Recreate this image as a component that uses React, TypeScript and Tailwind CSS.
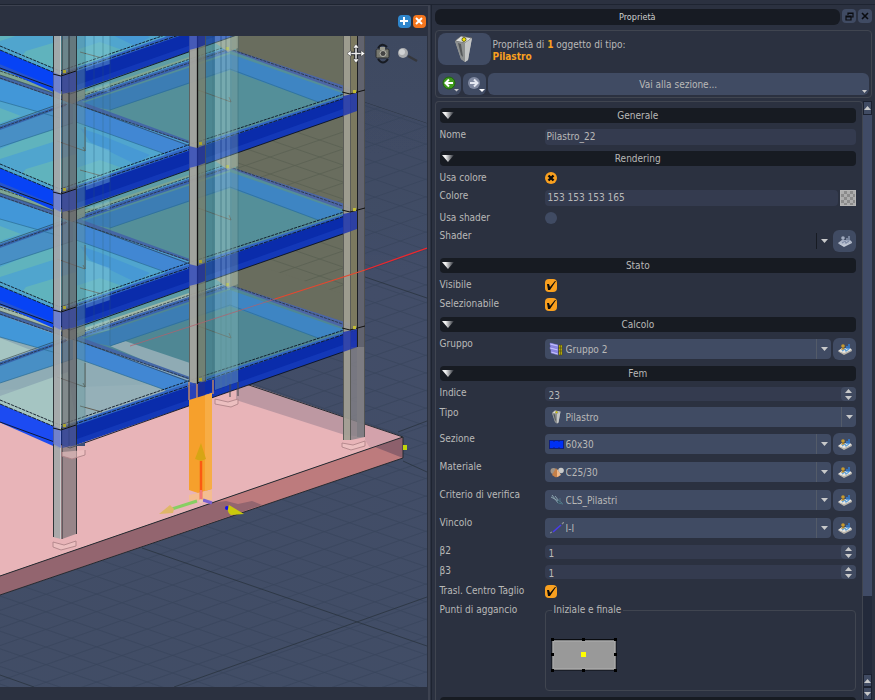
import React, { useState } from 'react';

const LEVELS = [354, 236, 118, 0];
const GRID_STEPS = Array.from({ length: 60 }, (_, i) => i);

const Grid: React.FC = () => (
  <g strokeWidth="0.8">
    <g stroke="#37445b" opacity="0.75">
      {GRID_STEPS.map(i => (
        <line key={`a${i}`} x1="0" y1={-20 + i * 17.6} x2="427" y2={127 + i * 17.6} />
      ))}
      {GRID_STEPS.map(i => (
        <line key={`b${i}`} x1="0" y1={100 + i * 17.6} x2="427" y2={-50 + i * 17.6} />
      ))}
    </g>
    <g stroke="#29333f">
      <path d="M365 102L427 123M365 277L427 298M142 548L427 646M174 687L427 597M0 675L34 687M403 461L427 472M398 432L427 421" />
    </g>
  </g>
);

// One storey: glass panes first, then the beams that frame them.
const Floor: React.FC<{ dy: number }> = ({ dy }) => {
  const ground = dy === 354;
  return (
    <g transform={`translate(0 ${dy - 118})`}>
      <path d="M-10 50L73 96L230 46L230 50L357 95L197 150L60 197L-10 168Z" fill={ground ? '#92b0b8' : '#4fa5d0'} opacity="0.97" />
      <path d="M73 101L230 50L357 95L197 146Z" fill={ground ? '#4f8794' : '#548f99'} />
      {ground && <path d="M110 110L125 105L190 127V144Z" fill="#8fabb4" />}
      {ground && <path d="M0 102L46 120L0 134ZM0 160L68 136L76 186L60 193L0 168Z" fill="#a5c5c2" />}
      {!ground && <path d="M0 149L53 127V142L0 159ZM26 169L76 154V184L60 189L22 174ZM0 108L21 116L0 123Z" fill="#60b3bd" />}
      {!ground && <path d="M76 168L100 160L128 170L76 187Z" fill="#5cb0bf" />}
      {!ground && <path d="M80 128L98 134L150 155L135 164L90 142Z" fill="#4799d4" />}
      <path d="M80 104L230 54L230 70L110 110Z" fill="#3c7db4" />
      <path d="M230 54L345 94L318 102L230 70Z" fill="#3e85c3" />
      <path d="M228 50L234 50L357 90L350 94Z" fill="#4c66a6" />
      <path d="M0 79L60 100L60 118L0 101Z" fill="#4297d8" />
      <path d="M0 128L73 103L73 123L0 147Z" fill="#488fc5" />
      <path d="M76 104L192 146L168 155L76 122Z" fill="#4187d3" />
      <path d="M76 99L230 47L230 52L78 103Z" fill="#3b64af" />
      <path d="M0 75L62 96L62 100L0 79ZM74 99L190 141L196 146L76 104Z" fill="#4467a6" />
      <path d="M0 126L66 103L66 106L0 130Z" fill="#3865ad" />
      <path d="M0 70L62 91L62 96L0 75ZM76 95L189 57V59L76 99Z" fill={ground ? '#a3b9a8' : '#7fa693'} />
      <g stroke="#242e39" strokeWidth="0.8" fill="none">
        <path d="M0 78L66 101L190 143M78 101L230 49L357 93M0 128L68 104M0 71L60 91M76 98L228 46" strokeDasharray="3 1" />
        <path d="M0 75L62 96M76 104L190 146M0 125L62 103" opacity="0.7" />
      </g>
      <path d="M76 122L168 155M110 110L230 69L318 102M0 147L73 123M0 101L60 118" stroke="#2b6d94" strokeWidth="0.7" fill="none" />
      {/* bracing arrows inside the bays */}
      <path d="M57 141L85 151M83 147L85 151M85 127L85 151M198 90L231 102M229 97L231 102M80 170L102 176" stroke="#5c5648" strokeWidth="0.9" fill="none" />

      <path d="M-10 164L60 193L60 213L-10 182Z" fill={ground ? '#1c4bf2' : '#0743f5'} />
      {!ground && <path d="M-10 178L60 207L68 211L-10 184Z" fill="#2553cd" />}
      <path d="M60 193L197 146L357 94L357 111L197 166L68 210L60 209Z" fill="#0a2cab" />
      <path d="M74 204L197 161L357 104L357 111L197 167L70 211Z" fill="#1338b8" />
      <path d="M60 191L197 144L357 92L357 94L197 148L60 195Z" fill="#3266c4" />
      <g stroke="#0c1320" strokeWidth="0.9" fill="none">
        <path d="M0 164L60 189L197 142L350 92" strokeDasharray="3 1" />
        <path d="M0 168L60 193L197 147L357 94" strokeDasharray="4 1" />
        <path d="M0 186L60 208L70 212L197 167L357 111L357 94" />
      </g>
    </g>
  );
};

const ModelView: React.FC = () => (
  <svg viewBox="0 36 427 651" preserveAspectRatio="xMinYMin slice" className="block h-full w-full" role="img" aria-label="Vista 3D">
    <defs>
      <linearGradient id="sky" x1="0" y1="0" x2="0" y2="1">
        <stop offset="0" stopColor="#3e4960" />
        <stop offset="0.3" stopColor="#424d68" />
        <stop offset="1" stopColor="#414d65" />
      </linearGradient>
      <clipPath id="plane">
        <path d="M0 36L240 60L365 102L427 123V687H0Z" />
      </clipPath>
    </defs>
    <rect x="-200" y="36" width="900" height="800" fill="url(#sky)" />
    <g clipPath="url(#plane)">
      <Grid />
    </g>

    {/* foundation slab */}
    <path d="M0 390L238 381L403 437L0 576Z" fill="#e8b4b8" />
    <path d="M248 384L365 424L365 437L345 435L236 400L236 384Z" fill="#bd98a2" />
    <path d="M365 424L403 437L370 448L365 440Z" fill="#d3a2ab" />
    <path d="M403 437V458L0 595V576Z" fill="#bd7b7d" />
    <path d="M0 576L212 503L226 501L238 504L252 501L262 505L0 595Z" fill="#93656f" />
    <path d="M375 447L403 437V458Z" fill="#8d606c" />
    <path d="M240 382L403 437V458L0 595M403 437L0 576" stroke="#252a30" strokeWidth="1" fill="none" />

    {/* rear wall */}
    <path d="M236 36H357V333L236 290Z" fill="#696d5e" />
    <g stroke="#5b6153" strokeWidth="0.8">
      {GRID_STEPS.slice(0, 12).map(i => (
        <path key={i} d={`M238 ${112 + i * 17}L343 ${148 + i * 17}M238 ${134 + i * 17}L343 ${98 + i * 17}`} fill="none" />
      ))}
    </g>
    <path d="M0 36H236V330H0Z" fill="#5e9da5" />
    <path d="M236 258L343 294V333L230 290Z" fill="#696d5e" />

    {LEVELS.map(dy => (
      <g key={dy}>
        <Floor dy={dy} />
        {/* joints between storeys */}
        <path d={`M214 ${dy - 76}L222 ${dy - 80}L238 ${dy - 84}V${dy - 70}L228 ${dy - 66}Z`} fill="#a39d83" opacity="0.9" />
        <path d={`M62 ${dy - 28}L85 ${dy - 31}V${dy - 20}L72 ${dy - 14}L62 ${dy - 18}Z`} fill="#8a8874" opacity="0.9" />
        <rect x="226" y={dy - 71} width="3" height="3" fill="#c3bd34" />
      </g>
    ))}

    {/* rear columns seen through the glass */}
    <g opacity="0.4">
      <path d="M215 36H232V290H215Z" fill="#a9d3d2" />
      <path d="M232 36H238V290H232Z" fill="#7fa5a2" />
      <path d="M205 36H215V380H205Z" fill="#427c86" />
      <path d="M76 36H85V420H76Z" fill="#63959c" />
      <path d="M221 36V390M226 36V390M231 36V390M238 36V390M213 36V370M85 36V420" stroke="#315e68" strokeWidth="0.8" />
    </g>
    <g opacity="0.35">
      <path d="M86 36H110V64L86 71ZM86 90L110 82V92L86 90ZM86 142L110 150V182L86 190ZM86 208L110 200V210L86 208ZM86 260L110 268V300L86 308ZM86 326L110 318V330L86 336Z" fill="#8fd0dc" />
      <path d="M94 36V330M103 36V330M110 36V345" stroke="#315e68" strokeWidth="0.8" />
    </g>
    <path d="M215 290H238V382L232 384L215 390Z" fill="#86bcbf" opacity="0.4" />
    <path d="M230 384V397M238 382V396" stroke="#45474c" />

    {/* front-left column */}
    <path d="M53 36H61V539L53 537Z" fill="#a5a8a9" opacity="0.93" />
    <path d="M62 36H76V534L62 539Z" fill="#716f73" opacity="0.68" />
    <path d="M69 36H76V446H69Z" fill="#586266" opacity="0.35" />
    <path d="M53.500 36V537M62 36V539M69 36V446M76.500 36V534" stroke="#23282c" strokeWidth="0.9" />
    <path d="M60.500 36V539" stroke="#d5d8d8" strokeWidth="0.7" />

    {/* middle column */}
    <path d="M189 36H197V384L189 382Z" fill="#a4a49e" opacity="0.95" />
    <path d="M198 36H205V382H198Z" fill="#77806f" opacity="0.85" />
    <path d="M189.500 36V382M205.500 36V382" stroke="#4d5350" strokeWidth="0.8" />
    <path d="M197.500 36V384" stroke="#111" strokeWidth="1.300" />

    {/* right column */}
    <path d="M343 36H351V440H343Z" fill="#a19f93" opacity="0.93" />
    <path d="M351 36H357V330H351Z" fill="#7c795f" />
    <path d="M357 36H365V437H357Z" fill="#656670" opacity="0.9" />
    <path d="M351 347H365V437L351 440Z" fill="#858287" opacity="0.8" />
    <path d="M343.500 36V440M350.500 36V440M364.500 36V437" stroke="#4a4b49" strokeWidth="0.8" />
    <path d="M357.500 36V347" stroke="#1b1d22" />

    {/* beam ends over the columns */}
    {LEVELS.map(dy => (
      <g key={dy}>
        <path d={`M53 ${dy + 72}L61 ${dy + 76}V${dy + 94}L53 ${dy + 90}Z`} fill="#5a70dc" opacity="0.65" />
        <path d={`M62 ${dy + 76}L76 ${dy + 71}V${dy + 91}L62 ${dy + 94}Z`} fill="#3a4a9e" opacity="0.75" />
        <path d={`M53 ${dy + 74}L61 ${dy + 76}L76 ${dy + 71}`} stroke="#111" fill="none" />
        <path d={`M189 ${dy + 28}L197 ${dy + 30}V${dy + 48}L189 ${dy + 50}Z`} fill="#2f48bd" opacity="0.8" />
        <path d={`M197 ${dy + 30}L205 ${dy + 27}V${dy + 45}L197 ${dy + 48}Z`} fill="#1c2f96" opacity="0.85" />
        <path d={`M343 ${dy - 22}L357 ${dy - 25}V${dy - 7}L343 ${dy - 2}Z`} fill="#2036ae" opacity="0.85" />
        <path d={`M342 ${dy - 26}L350 ${dy - 24}L365 ${dy - 28}`} stroke="#111" fill="none" />
        <rect x="63" y={dy + 70} width="3" height="3" fill="#a9a330" />
        <rect x="199" y={dy + 24} width="3" height="3" fill="#a9a330" />
        <rect x="353" y={dy - 28} width="3" height="3" fill="#c3bd34" />
      </g>
    ))}

    {/* footings */}
    <g stroke="#b08489" strokeWidth="0.9" fill="#efc6c5" fillOpacity="0.6">
      <path d="M53 542V547L61 550L76 546V541L64 545Z" />
      <path d="M215 399V404L231 407L238 404V399L228 402Z" />
      <path d="M342 443V447L351 450L365 446V441L353 445Z" />
      <path d="M62 452V456L72 459L85 455V450" />
    </g>
    <path d="M76 446H85V442L76 445Z" fill="#3c4f78" />

    {/* selected column */}
    <path d="M189 400L212 393V489L198 493L189 490Z" fill="#f6a02c" />
    <path d="M205 395L212 393V489L205 491Z" fill="#f7ad45" />
    <path d="M189 382V400M197 384V398M213 380V394" stroke="#e89a55" strokeWidth="1.200" />
    <path d="M189 495L212 490V500L189 501Z" fill="#f4bd91" />

    {/* x axis */}
    <path d="M427 248L365 270" stroke="#f0262c" strokeWidth="1.300" />
    <path d="M365 270L275 299" stroke="#e6472f" strokeWidth="1.200" />
    <path d="M275 299L130 346" stroke="#b4606c" strokeWidth="0.9" opacity="0.8" />

    {/* move gizmo */}
    <path d="M201 500V461" stroke="#fb5a12" strokeWidth="2.500" />
    <path d="M201 499V490" stroke="#f07878" strokeWidth="2.500" />
    <path d="M201 443L206 459L201 461L195 459Z" fill="#d7a514" />
    <path d="M197 501L172 509" stroke="#87cf62" strokeWidth="3" />
    <path d="M159 514L170 505L174 509L173 513Z" fill="#dfb768" />
    <path d="M203 500L212 503" stroke="#7c62cf" strokeWidth="3" />
    <circle cx="201" cy="501" r="2" fill="#eac7b0" />
    <circle cx="227" cy="508" r="2" fill="#1010f0" />
    <path d="M229 505Q226 512 231 515L244 514Z" fill="#c9c90c" />
    <rect x="403" y="445" width="4" height="5" fill="#c2d50b" />

    {/* view tools */}
    <path d="M356 47V60M349 53.500H363" stroke="#20242c" strokeWidth="3.500" />
    <path d="M356 47V60M349 53.500H363" stroke="#eee" strokeWidth="1.500" />
    <path d="M356 44L359 48H353ZM356 63L359 59H353ZM347 53.500L351 50.500V56.500ZM365 53.500L361 50.500V56.500Z" fill="#fff" stroke="#333" strokeWidth="0.5" />
    <path d="M378 48Q382 42 387 47M378 59Q383 66 388 59" stroke="#171b22" strokeWidth="2" fill="none" />
    <rect x="376" y="49" width="13" height="9" rx="1.500" fill="#77786f" stroke="#2b2d31" />
    <rect x="380" y="47" width="5" height="3" fill="#9b9b90" />
    <circle cx="383" cy="53.500" r="3" fill="#444" stroke="#b8b8ae" />
    <path d="M408 56L417 61" stroke="#35373c" strokeWidth="2.500" />
    <circle cx="403" cy="53" r="5" fill="#a9abad" />
    <circle cx="402" cy="52" r="3" fill="#d0d2d3" />
  </svg>
);

const PillarIcon: React.FC<{ className?: string }> = ({ className }) => (
  <svg viewBox="0 0 18 28" className={className} aria-hidden="true">
    <path d="M0 6L6 1L17 3L16 8L13 25L10 27L6 24Z" fill="#9fa1a1" />
    <path d="M0 6L6 1L17 3L10 8Z" fill="#dcdddc" stroke="#4d4f50" strokeWidth="0.7" />
    <path d="M10 8L17 3L13 25L10 27Z" fill="#c3c5c5" />
    <path d="M0 6L10 8L10 27L6 24Z" fill="#8d9090" />
    <path d="M3 8L6 9L8 22L6 20Z" fill="#55585a" />
    <circle cx="9" cy="4.500" r="2" fill="#f1e300" stroke="#4c4a12" strokeWidth="0.8" />
  </svg>
);

const GroupIcon = () => (
  <svg viewBox="0 0 15 14" className="h-[14px] w-[15px]" aria-hidden="true">
    <path d="M1 1L9 3V12L2 10Z" fill="#8e8ae6" />
    <path d="M1 1L9 3V5L1 3ZM1 5L9 7V9L1 7ZM2 9L9 11V13L2 11Z" fill="#c3c1ff" stroke="#6a66c4" strokeWidth="0.5" />
    <path d="M10 3H13V13H10Z" fill="#e0d000" stroke="#4e4a10" strokeWidth="0.6" />
    <path d="M10 6H13M10 9H13M11.500 3V13" stroke="#4e4a10" strokeWidth="0.7" />
  </svg>
);

const SectionIcon = () => (
  <svg viewBox="0 0 15 9" className="h-[9px] w-[15px]" aria-hidden="true">
    <rect x="0.500" y="0.500" width="14" height="8" fill="#0030f5" stroke="#10207c" />
    <path d="M5 0V2M10 0V2M5 7V9M10 7V9" stroke="#10207c" />
  </svg>
);

const MaterialIcon = () => (
  <svg viewBox="0 0 14 12" className="h-[12px] w-[14px]" aria-hidden="true">
    <circle cx="3.500" cy="5" r="3" fill="#a09488" />
    <circle cx="11" cy="4.500" r="2.800" fill="#c9cac9" />
    <path d="M6 2L10 8Q9 12 5 11L2 9Z" fill="#c47f48" />
    <path d="M7 3L7 11L11 9Z" fill="#efb88a" />
  </svg>
);

const CriterionIcon = () => (
  <svg viewBox="0 0 14 12" className="h-[12px] w-[14px]" aria-hidden="true">
    <path d="M2 1L8 9M5 2L9 7M1 3L12 9" stroke="#8aa2ad" fill="none" />
    <path d="M8 6L13 10L8 9ZM10 4V10" stroke="#4f7486" strokeWidth="0.9" fill="#263540" />
  </svg>
);

const ConstraintIcon = () => (
  <svg viewBox="0 0 14 12" className="h-[12px] w-[14px]" aria-hidden="true">
    <path d="M3 10L11 3" stroke="#4a3cf0" strokeWidth="1.500" />
    <path d="M0 11L2 10M12 2L14 0" stroke="#8a8d92" strokeWidth="1.300" />
  </svg>
);

const LibraryIcon: React.FC<{ dim?: boolean }> = ({ dim }) => (
  <svg viewBox="0 0 14 12" className="h-[12px] w-[14px]" aria-hidden="true">
    <path d="M0 8L4 5L12 5L14 7L6 11Z" fill={dim ? '#b4bccd' : '#e9e6df'} />
    <path d="M0 8L6 10L14 7V8L6 12L1 9Z" fill={dim ? '#c2c9d6' : '#b9b5ac'} />
    <path d="M4 8L7 6L8 8L11 6" stroke={dim ? '#7f8ba6' : '#5fa0d8'} strokeWidth="1.200" fill="none" />
    <circle cx="5" cy="3" r="1.800" fill={dim ? '#a1abc0' : '#c79a2e'} />
    <path d="M3 7L5 4L7 6Z" fill={dim ? '#a1abc0' : '#a87d20'} />
    <path d="M11 1V6M9 3V6" stroke={dim ? '#8995ae' : '#2f7fd6'} strokeWidth="1.500" fill="none" />
  </svg>
);

const Triangle: React.FC<{ up?: boolean }> = ({ up }) => (
  <svg viewBox="0 0 7 4" className="h-[4px] w-[7px]" aria-hidden="true">
    <path d={up ? 'M0 4L3.500 0L7 4Z' : 'M0 0H7L3.500 4Z'} fill="#c8c9ca" />
  </svg>
);

const SectionHeader: React.FC<{ title: string; onClick?: () => void }> = ({ title, onClick }) => (
  <button type="button" onClick={onClick} className="relative h-[15px] w-full shrink-0 rounded bg-[#171b22] pr-5 text-center leading-[16px]">
    <svg viewBox="0 0 12 7" className="absolute top-1 left-0.5 h-[7px] w-[12px]" aria-hidden="true">
      <defs>
        <linearGradient id="fold" x1="0" x2="1">
          <stop offset="0.3" stopColor="#f2f2f2" />
          <stop offset="1" stopColor="#23272f" />
        </linearGradient>
      </defs>
      <path d="M0 0H12L6 7Z" fill="url(#fold)" />
    </svg>
    {title}
  </button>
);

const Row: React.FC<{ id: string; label: string; children: React.ReactNode }> = ({ id, label, children }) => (
  <div className="flex shrink-0">
    <label htmlFor={id} className="w-[105px] shrink-0 leading-[12px] whitespace-nowrap">{label}</label>
    <div className="flex min-w-0 flex-1 items-center gap-0.5">{children}</div>
  </div>
);

const Combo: React.FC<{ id: string; value: string; icon: React.ReactNode }> = ({ id, value, icon }) => (
  <div className="relative h-5 min-w-0 flex-1">
    <select id={id} className="block h-5 w-full appearance-none rounded bg-[#404b63] pt-0.5 pl-[21px] leading-[16px] outline-none">
      <option>{value}</option>
    </select>
    <span className="pointer-events-none absolute inset-y-0 left-1 flex w-4 items-center justify-center">{icon}</span>
    <span className="pointer-events-none absolute inset-y-0 right-0 flex w-[15px] items-center justify-center border-l border-[#535b69]">
      <Triangle />
    </span>
  </div>
);

const LibraryButton: React.FC<{ label: string; dim?: boolean }> = ({ label, dim }) => (
  <button type="button" aria-label={label} className="flex h-[22px] w-[23px] shrink-0 items-center justify-center rounded-md bg-[#404b63]">
    <LibraryIcon dim={dim} />
  </button>
);

const Spinner: React.FC<{ id: string; initial: number }> = ({ id, initial }) => {
  const [value, setValue] = useState(initial);
  return (
    <div className="flex h-[14px] min-w-0 flex-1 rounded bg-[#343b4f]">
      <input
        id={id}
        type="text"
        inputMode="numeric"
        value={value}
        onChange={e => setValue(Number(e.target.value) || 0)}
        className="min-w-0 flex-1 bg-transparent pt-0.5 pl-1 outline-none"
      />
      <div className="flex w-[15px] flex-col items-center justify-between rounded-sm bg-[#404a60] py-px">
        <button type="button" aria-label="Aumenta" onClick={() => setValue(value + 1)} className="flex h-[5px] items-center">
          <Triangle up />
        </button>
        <button type="button" aria-label="Diminuisci" onClick={() => setValue(value - 1)} className="flex h-[5px] items-center">
          <Triangle />
        </button>
      </div>
    </div>
  );
};

const Check: React.FC<{ id: string }> = ({ id }) => (
  <span className="relative block h-[13px] w-[12px]">
    <input id={id} type="checkbox" defaultChecked className="peer block h-[13px] w-[12px] appearance-none rounded-sm bg-[#404b63] checked:bg-[#f9a01f]" />
    <svg viewBox="0 0 12 13" className="pointer-events-none absolute inset-0 hidden peer-checked:block" aria-hidden="true">
      <path d="M2 5H4L5 8L10 2H11L5 11H3Z" fill="#0b0b0b" />
    </svg>
  </span>
);

const RoundCheck: React.FC<{ id: string; checked?: boolean }> = ({ id, checked }) => (
  <span className="relative block h-[12px] w-[12px]">
    <input id={id} type="checkbox" defaultChecked={checked} className="peer block h-[12px] w-[12px] appearance-none rounded-full bg-[#404b63] checked:bg-[#f9a01f]" />
    <svg viewBox="0 0 12 12" className="pointer-events-none absolute inset-0 hidden peer-checked:block" aria-hidden="true">
      <path d="M3.500 3.500L8.500 8.500M8.500 3.500L3.500 8.500" stroke="#0b0b0b" strokeWidth="2.400" />
    </svg>
  </span>
);

const AnchorPicker: React.FC = () => (
  <svg viewBox="0 0 68 34" className="block h-[34px] w-[68px]" role="img" aria-label="Punti di aggancio della sezione">
    <rect x="2" y="2" width="64" height="30" fill="#999" stroke="#0a0c10" />
    <rect x="3" y="3" width="62" height="28" fill="none" stroke="#b0b0b0" />
    <path d="M2 1.500H66" stroke="#0a0c10" />
    <path d="M1 0H4V3H1ZM32 0H35V3H32ZM64 0H67V3H64ZM1 15H4V18H1ZM64 15H67V18H64ZM1 31H4V34H1ZM32 31H35V34H32ZM64 31H67V34H64Z" fill="#000" />
    <rect x="31" y="14" width="5" height="5" fill="#ff0" />
  </svg>
);

const PropertiesForm: React.FC = () => (
  <div className="flex min-h-0 min-w-0 flex-1 flex-col gap-1.5 overflow-hidden rounded-t border-t border-r border-l border-[#404550] pt-1.5 pr-1.5 pl-1">
    <SectionHeader title="Generale" />
    <Row id="nome" label="Nome">
      <input id="nome" type="text" defaultValue="Pilastro_22" className="h-4 min-w-0 flex-1 rounded bg-[#343b4f] pl-0.5 leading-[16px] outline-none" />
    </Row>
    <SectionHeader title="Rendering" />
    <Row id="usa-colore" label="Usa colore">
      <RoundCheck id="usa-colore" checked />
    </Row>
    <Row id="colore" label="Colore">
      <input id="colore" type="text" defaultValue="153 153 153 165" className="h-4 min-w-0 flex-1 rounded bg-[#343b4f] pl-[3px] leading-[16px] outline-none" />
      <button type="button" aria-label="Scegli colore" className="h-4 w-4 shrink-0 border border-[#b5b5b5] bg-[repeating-conic-gradient(#8b8b8b_0_25%,#adadad_0_50%)] bg-[length:6px_6px]" />
    </Row>
    <Row id="usa-shader" label="Usa shader">
      <RoundCheck id="usa-shader" />
    </Row>
    <Row id="shader" label="Shader">
      <div className="relative h-4 min-w-0 flex-1">
        <select id="shader" className="block h-4 w-full appearance-none bg-transparent outline-none">
          <option></option>
        </select>
        <span className="pointer-events-none absolute inset-y-0 right-0 flex w-[15px] items-center justify-center border-l border-[#171b23]">
          <Triangle />
        </span>
      </div>
      <LibraryButton label="Libreria shader" dim />
    </Row>
    <SectionHeader title="Stato" />
    <Row id="visibile" label="Visibile">
      <Check id="visibile" />
    </Row>
    <Row id="selezionabile" label="Selezionabile">
      <Check id="selezionabile" />
    </Row>
    <SectionHeader title="Calcolo" />
    <Row id="gruppo" label="Gruppo">
      <Combo id="gruppo" value="Gruppo 2" icon={<GroupIcon />} />
      <LibraryButton label="Libreria gruppi" />
    </Row>
    <SectionHeader title="Fem" />
    <Row id="indice" label="Indice">
      <Spinner id="indice" initial={23} />
    </Row>
    <Row id="tipo" label="Tipo">
      <Combo id="tipo" value="Pilastro" icon={<PillarIcon className="h-[14px] w-[9px]" />} />
    </Row>
    <Row id="sezione" label="Sezione">
      <Combo id="sezione" value="60x30" icon={<SectionIcon />} />
      <LibraryButton label="Libreria sezioni" />
    </Row>
    <Row id="materiale" label="Materiale">
      <Combo id="materiale" value="C25/30" icon={<MaterialIcon />} />
      <LibraryButton label="Libreria materiali" />
    </Row>
    <Row id="criterio" label="Criterio di verifica">
      <Combo id="criterio" value="CLS_Pilastri" icon={<CriterionIcon />} />
      <LibraryButton label="Libreria criteri" />
    </Row>
    <Row id="vincolo" label="Vincolo">
      <Combo id="vincolo" value="I-I" icon={<ConstraintIcon />} />
      <LibraryButton label="Libreria vincoli" />
    </Row>
    <Row id="beta2" label="β2">
      <Spinner id="beta2" initial={1} />
    </Row>
    <Row id="beta3" label="β3">
      <Spinner id="beta3" initial={1} />
    </Row>
    <Row id="taglio" label="Trasl. Centro Taglio">
      <Check id="taglio" />
    </Row>
    <div className="flex shrink-0">
      <span className="w-[105px] shrink-0 leading-[12px]">Punti di aggancio</span>
      <fieldset className="h-[87px] min-w-0 flex-1 rounded border border-[#404550] pt-[22px] pl-1">
        <legend className="ml-0.5 px-0.5 leading-[12px]">Iniziale e finale</legend>
        <AnchorPicker />
      </fieldset>
    </div>
    <SectionHeader title="" />
  </div>
);

const ScrollBar: React.FC = () => (
  <div className="flex w-[9px] shrink-0 flex-col bg-[#232a3b]">
    <button type="button" aria-label="Scorri su" className="flex h-[14px] items-center justify-center border border-[#1b2130] bg-[#404b63]">
      <Triangle up />
    </button>
    <div className="flex min-h-0 flex-1 flex-col">
      <div className="h-[86%] bg-[#404b66]" />
    </div>
    <button type="button" aria-label="Scorri su" className="flex h-[13px] items-center justify-center border border-[#1b2130] bg-[#404b63]">
      <Triangle up />
    </button>
    <button type="button" aria-label="Scorri giù" className="flex h-[13px] items-center justify-center border border-[#1b2130] bg-[#404b63]">
      <Triangle />
    </button>
  </div>
);

const ObjectHeader: React.FC = () => (
  <div className="flex flex-col gap-2 rounded border border-[#404550] p-0.5">
    <div className="flex items-center gap-0.5">
      <button type="button" aria-label="Tipo oggetto" className="flex h-8 w-[53px] items-center justify-center rounded-lg bg-[#404b63]">
        <PillarIcon className="h-[28px] w-[18px]" />
      </button>
      <div className="pt-1 leading-[12px]">
        <p>Proprietà di <b className="text-[#f9a01f]">1</b> oggetto di tipo:</p>
        <p className="font-bold text-[#f9a01f]">Pilastro</p>
      </div>
    </div>
    <div className="flex gap-0.5">
      <button type="button" aria-label="Indietro" className="flex h-[22px] w-[23px] items-center rounded-md bg-[#404b63] pl-1">
        <svg viewBox="0 0 19 16" className="h-[16px] w-[19px]" aria-hidden="true">
          <circle cx="7" cy="7" r="6" fill="#3f9a1c" stroke="#1f6310" />
          <path d="M11 7H4M7 3.500L3.500 7L7 10.500" stroke="#fff" strokeWidth="2" fill="none" />
          <path d="M12 13H17L14.500 15.500Z" fill="#ccc" />
        </svg>
      </button>
      <button type="button" aria-label="Avanti" className="flex h-[22px] w-[23px] items-center rounded-md bg-[#404b63] pl-1">
        <svg viewBox="0 0 19 16" className="h-[16px] w-[19px]" aria-hidden="true">
          <circle cx="7" cy="7" r="6" fill="#8089a0" />
          <path d="M3 7H10M7 3.500L10.500 7L7 10.500" stroke="#e6e9f2" strokeWidth="2" fill="none" />
          <path d="M12 13H18L15 16Z" fill="#fff" />
        </svg>
      </button>
      <button type="button" className="relative h-[22px] flex-1 rounded-md bg-[#404b63]">
        Vai alla sezione...
        <svg viewBox="0 0 5 3" className="absolute right-0.5 bottom-0.5 h-[3px] w-[5px]" aria-hidden="true">
          <path d="M0 0H5L2.500 3Z" fill="#ccc" />
        </svg>
      </button>
    </div>
  </div>
);

const App: React.FC = () => (
  <div className="flex h-screen flex-col overflow-hidden bg-[#2b3140] pt-1 font-['DejaVu_Sans_Condensed','DejaVu_Sans',sans-serif] text-[10px] text-[#b9b9b8]">
    <div className="flex min-h-0 flex-1 border-t border-[#1e2431]">
      <section className="flex min-w-0 flex-[432] flex-col border-t border-r-2 border-[#3d4250] pb-[13px]">
        <div className="flex h-[30px] shrink-0 items-center justify-end gap-0.5 pr-0.5">
          <button type="button" aria-label="Ingrandisci" className="flex h-[13px] w-[13px] items-center justify-center rounded-sm bg-[#2f86cc]">
            <svg viewBox="0 0 8 8" className="h-[8px] w-[8px]" aria-hidden="true">
              <path d="M4 0V8M0 4H8" stroke="#fff" strokeWidth="2" />
            </svg>
          </button>
          <button type="button" aria-label="Chiudi vista" className="flex h-[13px] w-[13px] items-center justify-center rounded-sm bg-[#f5761d]">
            <svg viewBox="0 0 8 8" className="h-[8px] w-[8px]" aria-hidden="true">
              <path d="M1 1L7 7M7 1L1 7" stroke="#fff" strokeWidth="2" />
            </svg>
          </button>
        </div>
        <div className="mr-px min-h-0 flex-1">
          <ModelView />
        </div>
      </section>

      <aside className="ml-px flex min-w-0 flex-[442] flex-col border-l border-[#1e2431] pt-1 pr-[3px] pl-[3px]">
        <div className="mb-[5px] flex h-4 shrink-0 gap-0.5">
          <h1 className="flex-1 rounded-md bg-[#171b23] text-center text-[9px] leading-[16px] text-[#d0d0d0]">Proprietà</h1>
          <button type="button" aria-label="Sgancia" className="flex h-[14px] w-[14px] items-center justify-center rounded bg-[#404b63]">
            <svg viewBox="0 0 9 9" className="h-[9px] w-[9px]" aria-hidden="true">
              <path d="M3 3V1H8V5H6M1 4H6V8H1ZM1 5H6M3 1.500H8" stroke="#0a0c10" strokeWidth="1.200" fill="none" />
            </svg>
          </button>
          <button type="button" aria-label="Chiudi" className="flex h-[14px] w-[14px] items-center justify-center rounded bg-[#404b63]">
            <svg viewBox="0 0 8 8" className="h-[8px] w-[8px]" aria-hidden="true">
              <path d="M1 1L7 7M7 1L1 7" stroke="#0a0c10" strokeWidth="1.600" />
            </svg>
          </button>
        </div>
        <ObjectHeader />
        <div className="mt-[3px] flex min-h-0 flex-1">
          <PropertiesForm />
          <ScrollBar />
        </div>
      </aside>
    </div>
  </div>
);

export default App;
